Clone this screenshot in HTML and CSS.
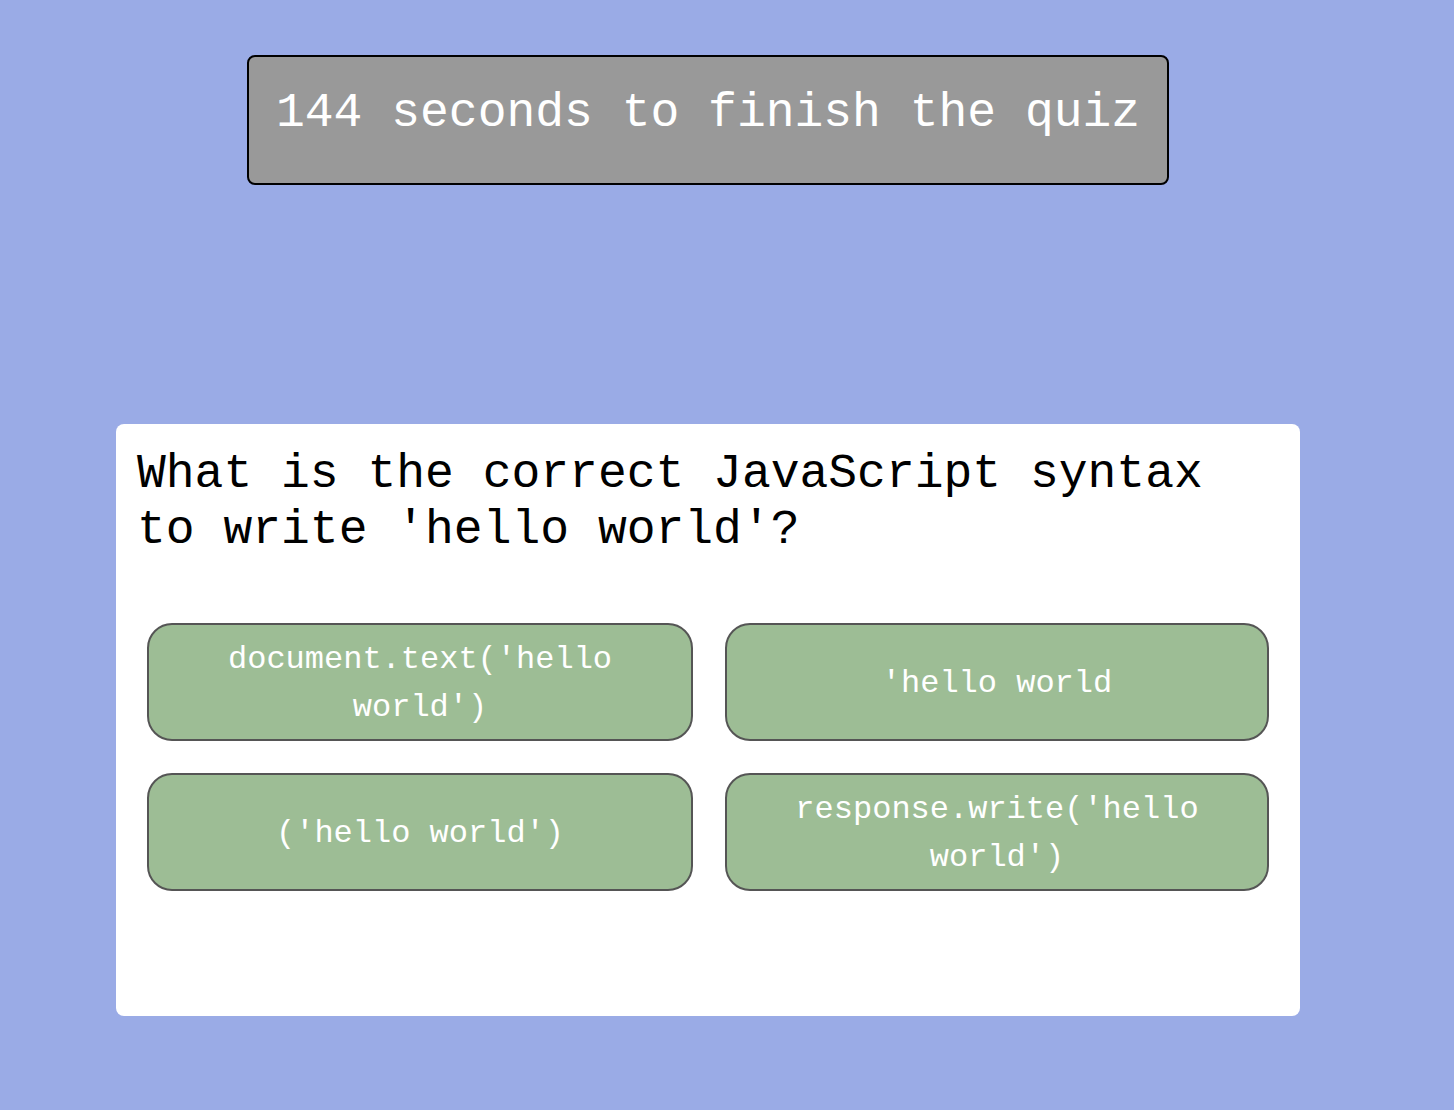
FILE: index.html
```html
<!DOCTYPE html>
<html lang="en">
<head>
<meta charset="utf-8">
<title>Quiz</title>
<link rel="stylesheet" href="styles.css">
</head>
<body>
<div class="wrap">
  <div class="timer">144 seconds to finish the quiz</div>
  <div class="card">
    <h2 class="question">What is the correct JavaScript syntax to write 'hello world'?</h2>
    <div class="answers">
      <button class="answer">document.text('hello world')</button>
      <button class="answer">'hello world</button>
      <button class="answer">('hello world')</button>
      <button class="answer">response.write('hello world')</button>
    </div>
  </div>
</div>
</body>
</html>
```

FILE: styles.css
```css
html, body {
  margin: 0;
  padding: 0;
}
body {
  background: #9aabe6;
  font-family: "Courier New", "Liberation Mono", monospace;
  min-height: 1110px;
}
.wrap {
  width: 1184px;
  margin-left: 116px;
  padding-top: 55px;
}
.timer {
  width: 864px;
  margin: 0 auto;
  background: #999999;
  border: 2px solid #000;
  border-radius: 8px;
  color: #fff;
  font-size: 48px;
  line-height: 54px;
  padding: 29px 27px 43px;
  text-align: center;
  white-space: nowrap;
}
.card {
  margin-top: 239px;
  background: #fff;
  border-radius: 8px;
  height: 592px;
  box-sizing: border-box;
  padding: 22px 31px 0 21px;
}
.question {
  margin: 0;
  font-size: 48px;
  font-weight: normal;
  line-height: 56px;
  color: #000;
  width: 1150px;
}
.answers {
  margin-top: 65px;
  margin-left: 10px;
  display: grid;
  grid-template-columns: 546px 544px;
  gap: 32px;
}
.answer {
  display: flex;
  align-items: center;
  justify-content: center;
  min-height: 118px;
  box-sizing: border-box;
  padding: 11px 20px 7px;
  background: #9dbd95;
  border: 2px solid #555555;
  border-radius: 25px;
  color: #fff;
  font-family: "Courier New", "Liberation Mono", monospace;
  font-size: 32px;
  line-height: 48px;
  text-align: center;
}
```
